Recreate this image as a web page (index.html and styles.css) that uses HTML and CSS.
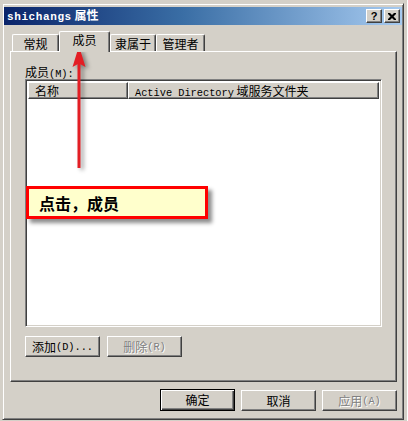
FILE: index.html
```html
<!DOCTYPE html>
<html>
<head>
<meta charset="utf-8">
<link rel="stylesheet" href="styles.css">
</head>
<body>
<div class="desk">
  <div class="dialog">
    <div class="titlebar">
      <span class="title"><span class="tmono">shichangs</span> 属性</span>
      <div class="capbtns">
        <div class="capbtn">?</div>
        <div class="capbtn">
          <svg width="8" height="7" viewBox="0 0 8 7"><path d="M0 0h2l2 2 2-2h2v1l-2.5 2.5 2.5 2.5v1h-2l-2-2-2 2h-2v-1l2.5-2.5-2.5-2.5z" fill="#000"/></svg>
        </div>
      </div>
    </div>
    <div class="content">
      <div class="tabs">
        <div class="tab t1">常规</div>
        <div class="tab sel">成员</div>
        <div class="tab t3">隶属于</div>
        <div class="tab t4">管理者</div>
      </div>
      <div class="panel">
        <div class="label">成员<span class="mono">(M):</span></div>
        <div class="list">
          <div class="header">
            <div class="hcell c1">名称</div>
            <div class="hcell c2"><span class="mono">Active Directory</span> 域服务文件夹</div>
          </div>
        </div>
        <div class="panelbtns">
          <div class="btn">添加<span class="mono">(D)...</span></div>
          <div class="btn dis">删除<span class="mono">(R)</span></div>
        </div>
      </div>
      <div class="footer">
        <div class="btn def">确定</div>
        <div class="btn low">取消</div>
        <div class="btn low dis">应用<span class="mono">(A)</span></div>
      </div>
    </div>
  </div>
  <div class="callout">点击，成员</div>
  <svg class="arrow" width="30" height="136" viewBox="0 0 30 136">
    <rect x="9.5" y="22" width="3" height="106" fill="#e31e24"/>
    <polygon points="11,6 17.5,27 11,23.5 4.5,27" fill="#e31e24"/>
  </svg>
</div>
</body>
</html>
```

FILE: styles.css
```css
* { box-sizing: border-box; }
html, body { margin: 0; padding: 0; }
body {
  font-family: "Noto Sans CJK SC", "Liberation Sans", sans-serif;
  font-size: 12px;
  color: #000;
  background: #d4d0c8;
}
.desk {
  position: relative;
  width: 408px;
  height: 421px;
  overflow: hidden;
  background: #d4d0c8;
  padding: 3px 0 0 2px;
  border-right: 1px solid #fff;
}
.dialog {
  width: 402px;
  height: 417px;
  border: 1px solid;
  border-color: #d4d0c8 #404040 #404040 #d4d0c8;
  box-shadow: inset 1px 1px #fff, inset -1px -1px #808080;
  padding: 3px 1px 1px 1px;
  background: #d4d0c8;
  display: flex;
  flex-direction: column;
}
.titlebar {
  height: 18px;
  background: linear-gradient(to right, #0a246a 0%, #3a6ea5 45%, #a6caf0 100%);
  display: flex;
  align-items: center;
  justify-content: space-between;
  padding: 0 2px 0 3px;
  color: #fff;
  font-weight: bold;
}
.title { font-size: 12px; line-height: 16px; white-space: nowrap; }
.tmono {
  font-family: "Liberation Mono", "DejaVu Sans Mono", monospace;
  font-size: 11px;
  font-weight: bold;
  letter-spacing: 0.6px;
}
.mono { font-family: "Liberation Mono", "DejaVu Sans Mono", monospace; font-size: 10.3px; }
.capbtns { display: flex; gap: 2px; }
.capbtn {
  width: 16px;
  height: 14px;
  background: #d4d0c8;
  border: 1px solid;
  border-color: #fff #404040 #404040 #fff;
  box-shadow: inset -1px -1px #808080;
  color: #000;
  font-family: "Liberation Sans", sans-serif;
  font-weight: bold;
  font-size: 11px;
  line-height: 12px;
  display: flex;
  align-items: center;
  justify-content: center;
}
.content {
  flex: 1;
  padding: 6px 5px 0 6px;
  display: flex;
  flex-direction: column;
}
.tabs {
  display: flex;
  align-items: flex-end;
  height: 20px;
  padding-left: 2px;
  position: relative;
  z-index: 1;
}
.tab {
  height: 17px;
  border: 1px solid;
  border-bottom: none;
  border-color: #fff #404040 #404040 #fff;
  box-shadow: inset -1px 0 #808080;
  border-radius: 2px 2px 0 0;
  background: #d4d0c8;
  text-align: center;
  line-height: 14px;
  padding-top: 2px;
  white-space: nowrap;
}
.t1 { width: 47px; }
.t3 { width: 46px; }
.t4 { width: 49px; }
.sel {
  width: 51px;
  height: 21px;
  margin-bottom: -1px;
  padding-top: 1px;
}
.panel {
  height: 331px;
  border: 1px solid;
  border-color: #fff #404040 #404040 #fff;
  box-shadow: inset -1px -1px #808080;
  padding: 12px 14px 0 14px;
}
.label { line-height: 15px; height: 15px; white-space: nowrap; }
.list {
  height: 248px;
  border: 1px solid;
  border-color: #808080 #fff #fff #808080;
  box-shadow: inset 1px 1px #404040, inset -1px -1px #d4d0c8;
  background: #fff;
  padding: 2px;
}
.header { display: flex; }
.hcell {
  height: 17px;
  background: #d4d0c8;
  border: 1px solid;
  border-color: #fff #404040 #404040 #fff;
  box-shadow: inset -1px -1px #808080;
  padding-left: 6px;
  line-height: 15px;
  white-space: nowrap;
}
.c1 { width: 100px; }
.c2 { flex: 1; }
.panelbtns {
  display: flex;
  gap: 7px;
  margin-top: 9px;
}
.btn {
  width: 75px;
  height: 21px;
  background: #d4d0c8;
  border: 1px solid;
  border-color: #fff #404040 #404040 #fff;
  box-shadow: inset -1px -1px #808080;
  display: flex;
  align-items: center;
  justify-content: center;
  line-height: 14px;
  white-space: nowrap;
}
.dis { color: #808080; text-shadow: 1px 1px #fff; }
.footer {
  display: flex;
  justify-content: flex-end;
  align-items: flex-start;
  gap: 6px;
  padding-top: 7px;
}
.def {
  height: 22px;
  border: 1px solid #000;
  box-shadow: inset 1px 1px #fff, inset -1px -1px #404040, inset -2px -2px #808080;
}
.low { margin-top: 1px; }
.callout {
  position: absolute;
  left: 26px;
  top: 186px;
  width: 182px;
  height: 33px;
  border: 3px solid #ff0000;
  background: #ffffcc;
  box-shadow: 4px 4px 4px rgba(0, 0, 0, 0.45);
  font-size: 16px;
  font-weight: bold;
  line-height: 20px;
  padding: 4px 0 0 10px;
  white-space: nowrap;
}
.arrow {
  position: absolute;
  left: 68px;
  top: 40px;
  filter: drop-shadow(3px 2px 2px rgba(0, 0, 0, 0.4));
}
```
